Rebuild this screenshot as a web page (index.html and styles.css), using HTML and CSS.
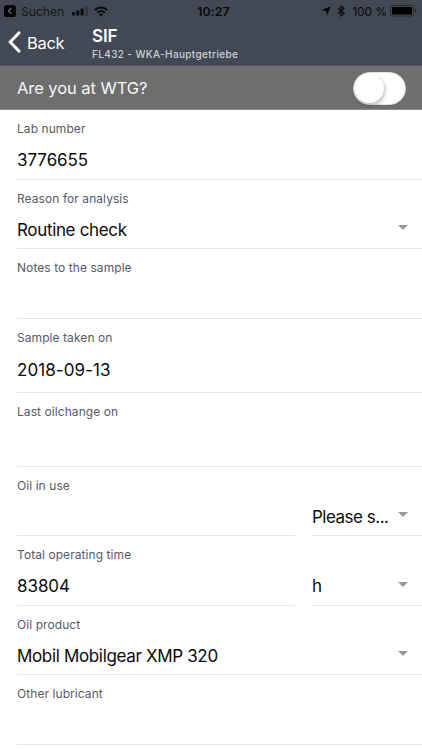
FILE: index.html
```html
<!DOCTYPE html>
<html lang="en">
<head>
<meta charset="utf-8">
<title>SIF</title>
<link rel="stylesheet" href="styles.css">
</head>
<body>
<header class="header">
  <div class="status">
    <div class="status-left">
      <svg class="app-icon" width="12" height="12" viewBox="0 0 12 12"><rect width="12" height="12" rx="2.6" fill="#050608"/><path d="M7.3 3.2 4.5 6l2.8 2.8" fill="none" stroke="#6d727b" stroke-width="1.2"/></svg>
      <span class="carrier">Suchen</span>
      <svg class="signal" width="17" height="10" viewBox="0 0 17 10"><g fill="#07090c"><rect y="6" width="3" height="3.6" rx=".7"/><rect x="4.3" y="4.6" width="3" height="5" rx=".7"/><rect x="8.6" y="2.6" width="3" height="7" rx=".7"/></g><rect x="13" y=".4" width="3" height="9.2" rx=".7" fill="#303641"/></svg>
      <svg class="wifi" width="14" height="11" viewBox="0 0 14 11"><g fill="none" stroke="#07090c" stroke-width="2"><path d="M.8 4.1a8.8 8.8 0 0 1 12.4 0"/><path d="M3.2 6.6a5.4 5.4 0 0 1 7.6 0"/></g><path d="M7 10.5 4.8 8.3a3.1 3.1 0 0 1 4.4 0z" fill="#07090c"/></svg>
    </div>
    <div class="clock">10:27</div>
    <div class="status-right">
      <svg width="10" height="10" viewBox="0 0 10 10"><path d="M9.8.2 6 9.7 5.2 5 .2 4.2z" fill="#050608"/></svg>
      <svg class="bluetooth" width="8" height="12" viewBox="0 0 8 12"><path d="M.8 3.2 7 8.6 4 11V1l3 2.4L.8 8.8" fill="none" stroke="#050608" stroke-width="1.1"/></svg>
      <span class="percent">100 %</span>
      <svg class="battery" width="27" height="12" viewBox="0 0 27 12"><rect x=".5" y=".5" width="23" height="10.6" rx="2.5" fill="none" stroke="#252a33"/><rect x="2" y="2" width="20" height="7.6" rx="1.2" fill="#000"/><path d="M25 4v4q1.3-.6 1.3-2T25 4" fill="#252a33"/></svg>
    </div>
  </div>
  <nav class="nav">
    <svg class="chevron" width="13" height="22" viewBox="0 0 13 22"><path d="M11.9.9 2.2 11l9.7 10.1" fill="none" stroke="#fff" stroke-width="2.9"/></svg>
    <span class="back">Back</span>
    <div class="titles">
      <h1 class="title"><span>SIF</span></h1>
      <div class="subtitle">FL432 - WKA-Hauptgetriebe</div>
    </div>
  </nav>
</header>
<section class="banner">
  <span class="question">Are you at WTG?</span>
  <span class="toggle"><span class="knob"></span></span>
</section>
<main class="form">
  <div class="row first"><div class="field"><label>Lab number</label><div class="value digits">3776655</div></div></div>
  <div class="row short"><div class="field"><label>Reason for analysis</label><div class="value">Routine check</div><i class="caret"></i></div></div>
  <div class="row"><div class="field"><label>Notes to the sample</label></div></div>
  <div class="row date"><div class="field"><label>Sample taken on</label><div class="value digits">2018-09-13</div></div></div>
  <div class="row date"><div class="field"><label>Last oilchange on</label></div></div>
  <div class="row short"><div class="field"><label>Oil in use</label></div><div class="field unit"><div class="value placeholder">Please s...</div><i class="caret"></i></div></div>
  <div class="row"><div class="field"><label>Total operating time</label><div class="value digits">83804</div></div><div class="field unit"><div class="value">h</div><i class="caret"></i></div></div>
  <div class="row short"><div class="field"><label>Oil product</label><div class="value">Mobil Mobilgear XMP 320</div><i class="caret"></i></div></div>
  <div class="row"><div class="field"><label>Other lubricant</label></div></div>
</main>
</body>
</html>
```
FILE: styles.css
```css
* { box-sizing: border-box; }
body { margin: 0; height: 750px; overflow: hidden; background: #fff; color: #0b0b0b; font-family: Inter, "Liberation Sans", sans-serif; }
svg { display: block; flex: none; }
span, .clock, .value, label, .subtitle { white-space: nowrap; }
.header { height: 66px; background: #424854; border-bottom: 1px solid #51545b; }
.status { height: 22px; display: grid; grid-template-columns: 1fr auto 1fr; align-items: center; color: #07090c; font-size: 12px; }
.status-left, .status-right { display: flex; align-items: center; height: 22px; }
.status-left { padding-left: 4px; }
.status-right { justify-content: flex-end; padding-right: 5px; }
.carrier { margin-left: 5px; width: 43px; font-size: 12.2px; letter-spacing: -.05px; color: #15181e; }
.signal { margin-left: 8px; }
.wifi { margin-left: 5px; }
.clock { font-size: 12.2px; font-weight: 600; letter-spacing: .2px; padding-left: 5px; }
.bluetooth { margin-left: 6px; }
.percent { margin: 0 3px 0 7px; letter-spacing: -.1px; }
.nav { height: 43px; display: flex; color: #fff; }
.chevron { margin: 9px 0 0 8px; }
.back { margin-left: 6px; width: 39px; font-size: 16.5px; line-height: 42px; letter-spacing: -.3px; }
.titles { margin-left: 26px; }
.title { margin: 4px 0 0; font-size: 17px; font-weight: 600; line-height: 20px; letter-spacing: -.1px; }
.subtitle { font-size: 10px; font-weight: 500; line-height: 14px; margin-top: 1px; color: #cfd1d5; letter-spacing: .36px; }
.banner { height: 44px; display: flex; justify-content: space-between; align-items: center; padding: 0 16px 0 17px; background: #6e6e6e; border-bottom: 1px solid #8b8b8b; }
.question { color: #f7f7f7; font-size: 16.5px; letter-spacing: -.06px; }
.toggle { width: 53px; height: 33px; border-radius: 17px; background: #fff; border: 1px solid #e3e3e3; margin-top: 1px; }
.knob { display: block; width: 29px; height: 29px; margin: 1px; border-radius: 50%; background: #fff; box-shadow: 1px 2px 4px rgba(0,0,0,.28); }
.row { height: 70px; padding-left: 17px; display: flex; gap: 17px; }
.row.short { height: 69px; }
.row.date { height: 74px; }
.field { position: relative; flex: 1; height: 100%; border-bottom: 1px solid #e6e6e6; padding-top: 10px; }
.unit { flex: 0 0 110px; padding-top: 28px; }
label { display: block; font-size: 12px; line-height: 18px; color: #565b66; letter-spacing: .07px; }
.value { font-size: 17px; line-height: 24px; margin-top: 10px; letter-spacing: -.34px; }
.value.digits { letter-spacing: -.06px; }
.value.placeholder { letter-spacing: -.5px; }
.date .value { margin-top: 11px; }
.date .value.digits { letter-spacing: .08px; }
.caret { position: absolute; right: 14px; bottom: 18px; border: 5px solid transparent; border-top-color: #999; border-bottom: 0; }
```
